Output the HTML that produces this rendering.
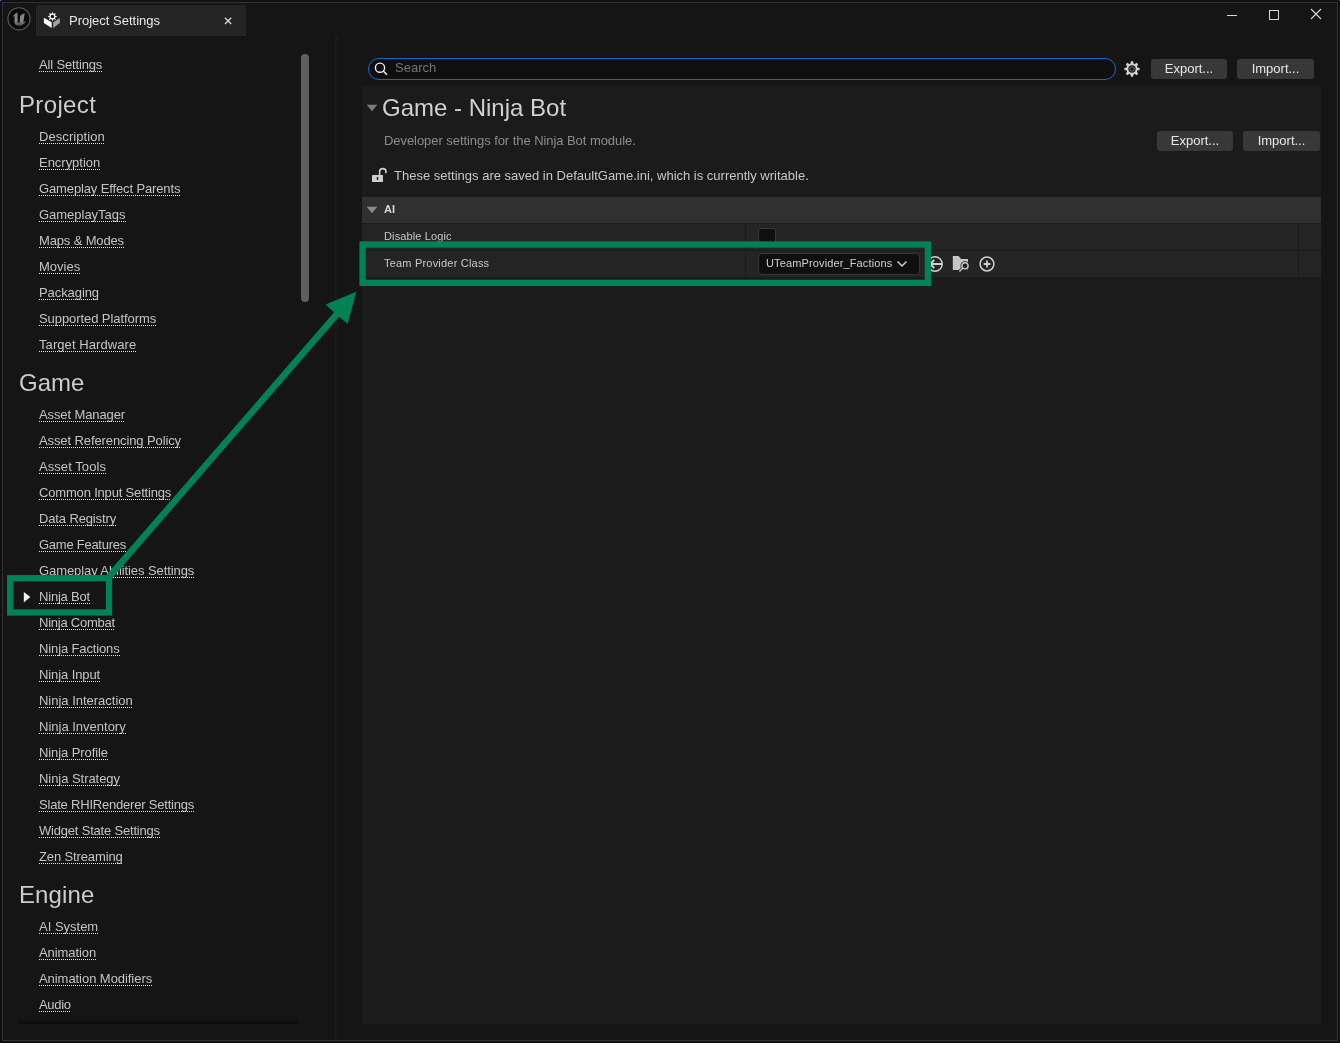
<!DOCTYPE html>
<html><head><meta charset="utf-8">
<style>
*{margin:0;padding:0;box-sizing:border-box}
html,body{width:1340px;height:1043px;overflow:hidden;background:#101010;font-family:"Liberation Sans",sans-serif}
.t{will-change:transform}
.a{position:absolute}
#win{position:absolute;left:2px;top:2px;width:1336px;height:1039px;border:1px solid #323232;background:#151515}
.t{position:absolute;white-space:nowrap;line-height:20px}
.lk{font-size:13px;color:#c4c4c4;left:39px}
.lk::after{content:"";position:absolute;left:0;right:0;top:16px;height:1px;background:repeating-linear-gradient(90deg,#e6e6e6 0 1px,transparent 1px 2px)}
.hd{font-size:24px;color:#cccccc;left:19px;line-height:30px}
.btn{will-change:transform;position:absolute;background:#383838;border-radius:3px;color:#e6e6e6;font-size:13px;line-height:20px;text-align:center}
</style></head><body>
<div id="win"></div>
<div class="a" style="left:0;top:0;width:1px;height:1px;background:#4a7fd0"></div>
<div class="a" style="left:1339px;top:0;width:1px;height:1px;background:#3a5f9a"></div>

<!-- UE logo -->
<svg class="a" style="left:0;top:0" width="34" height="34" viewBox="0 0 34 34">
  <defs><linearGradient id="ug" x1="0" y1="0" x2="0" y2="1"><stop offset="0" stop-color="#7a7a7a"/><stop offset="0.6" stop-color="#8c8c8c"/><stop offset="1" stop-color="#4e4e4e"/></linearGradient></defs>
  <circle cx="19" cy="18.8" r="11.1" fill="#0a0a0a" stroke="#5a5a5a" stroke-width="1.1"/>
  <path d="M12 17.6 Q13.8 13.6 17.5 12.2 L17.6 22 Q18 23.3 19.8 22.6 L20.1 16 Q21.8 13.9 24.7 13.1 L23.3 22.1 Q24.6 21.9 25.9 20.9 Q23.6 25.6 19 25.7 Q14.9 25.7 14.5 22.4 L14.6 16.1 Q13 16.5 12 17.6 Z" fill="url(#ug)"/>
</svg>

<!-- Tab -->
<div class="a" style="left:36px;top:5px;width:210px;height:31px;background:#242424;border-radius:4px 4px 0 0"></div>
<svg class="a" style="left:40px;top:8px" width="24" height="24" viewBox="0 0 24 24">
  <path d="M3.9 9.8 L11.7 14.3 L11.7 20 L3.9 15 Z" fill="#ffffff"/>
  <path d="M13.2 14.3 L19.9 9.9 L19.9 15 L13.2 20 Z" fill="#a2a2a2"/>
  <path d="M12.40 3.70 L13.43 6.01 L15.79 5.11 L14.89 7.47 L17.20 8.50 L14.89 9.53 L15.79 11.89 L13.43 10.99 L12.40 13.30 L11.37 10.99 L9.01 11.89 L9.91 9.53 L7.60 8.50 L9.91 7.47 L9.01 5.11 L11.37 6.01 Z" fill="#ffffff"/>
  <circle cx="12.4" cy="8.5" r="1.7" fill="#111"/>
</svg>
<div class="t" style="left:69px;top:11px;font-size:13px;color:#e8e8e8">Project Settings</div>
<svg class="a" style="left:224px;top:17px" width="8" height="8" viewBox="0 0 8 8"><path d="M1 0.8 L7.2 7 M7.2 0.8 L1 7" stroke="#d4d4d4" stroke-width="1.4"/></svg>

<!-- window controls -->
<div class="a" style="left:1227px;top:15px;width:10px;height:1px;background:#d8d8d8"></div>
<div class="a" style="left:1269px;top:10px;width:10px;height:10px;border:1px solid #d8d8d8"></div>
<svg class="a" style="left:1310px;top:8px" width="12" height="12" viewBox="0 0 12 12"><path d="M1 1 L11 11 M11 1 L1 11" stroke="#d8d8d8" stroke-width="1.1"/></svg>

<!-- sidebar divider strip -->
<div class="a" style="left:335px;top:36px;width:3px;height:1004px;background:#1a1a1a"></div>
<!-- scrollbar -->
<div class="a" style="left:301px;top:54px;width:8px;height:248px;background:#5e5e5e;border-radius:4px"></div>
<!-- bottom shadow -->
<div class="a" style="left:19px;top:1016px;width:280px;height:8px;background:linear-gradient(rgba(0,0,0,0),rgba(0,0,0,0.15) 60%,rgba(0,0,0,0.55))"></div>

<div id="sidebar">
<div class="t lk" style="top:55px;letter-spacing:-0.154px">All Settings</div>
<div class="t hd" style="top:90px;letter-spacing:0.35px">Project</div>
<div class="t lk" style="top:127px;letter-spacing:0.07px">Description</div>
<div class="t lk" style="top:153px;letter-spacing:-0.022px">Encryption</div>
<div class="t lk" style="top:179px;letter-spacing:-0.13px">Gameplay Effect Parents</div>
<div class="t lk" style="top:205px;letter-spacing:-0.018px">GameplayTags</div>
<div class="t lk" style="top:231px;letter-spacing:-0.15px">Maps &amp; Modes</div>
<div class="t lk" style="top:257px;letter-spacing:0.002px">Movies</div>
<div class="t lk" style="top:283px;letter-spacing:-0.08px">Packaging</div>
<div class="t lk" style="top:309px;letter-spacing:-0.075px">Supported Platforms</div>
<div class="t lk" style="top:335px;letter-spacing:0.079px">Target Hardware</div>
<div class="t hd" style="top:368px">Game</div>
<div class="t lk" style="top:405px;letter-spacing:-0.111px">Asset Manager</div>
<div class="t lk" style="top:431px;letter-spacing:-0.105px">Asset Referencing Policy</div>
<div class="t lk" style="top:457px;letter-spacing:0.068px">Asset Tools</div>
<div class="t lk" style="top:483px;letter-spacing:-0.174px">Common Input Settings</div>
<div class="t lk" style="top:509px;letter-spacing:-0.135px">Data Registry</div>
<div class="t lk" style="top:535px;letter-spacing:-0.256px">Game Features</div>
<div class="t lk" style="top:561px;letter-spacing:-0.086px">Gameplay Abilities Settings</div>
<div class="t lk" style="top:587px;letter-spacing:-0.194px">Ninja Bot</div>
<div class="t lk" style="top:613px;letter-spacing:-0.23px">Ninja Combat</div>
<div class="t lk" style="top:639px;letter-spacing:-0.127px">Ninja Factions</div>
<div class="t lk" style="top:665px;letter-spacing:-0.096px">Ninja Input</div>
<div class="t lk" style="top:691px;letter-spacing:-0.015px">Ninja Interaction</div>
<div class="t lk" style="top:717px;letter-spacing:-0.001px">Ninja Inventory</div>
<div class="t lk" style="top:743px;letter-spacing:-0.084px">Ninja Profile</div>
<div class="t lk" style="top:769px;letter-spacing:-0.047px">Ninja Strategy</div>
<div class="t lk" style="top:795px;letter-spacing:-0.205px">Slate RHIRenderer Settings</div>
<div class="t lk" style="top:821px;letter-spacing:-0.196px">Widget State Settings</div>
<div class="t lk" style="top:847px;letter-spacing:-0.128px">Zen Streaming</div>
<div class="t hd" style="top:880px;left:18.5px;letter-spacing:0.1px">Engine</div>
<div class="t lk" style="top:917px;letter-spacing:-0.006px">AI System</div>
<div class="t lk" style="top:943px;letter-spacing:-0.079px">Animation</div>
<div class="t lk" style="top:969px;letter-spacing:-0.056px">Animation Modifiers</div>
<div class="t lk" style="top:995px;letter-spacing:-0.33px">Audio</div>
</div>

<!-- content panel -->
<div class="a" style="left:362px;top:86px;width:959px;height:938px;background:#1b1b1b"></div>


<!-- search bar -->
<div class="a" style="left:368px;top:58px;width:748px;height:22px;border:1.4px solid #1767cf;border-radius:11px;background:#0f0f0f"></div>
<svg class="a" style="left:372px;top:60px" width="18" height="18" viewBox="0 0 18 18"><circle cx="8" cy="7.7" r="4.6" fill="none" stroke="#efefef" stroke-width="1.4"/><path d="M11.3 11 L15 14.8" stroke="#efefef" stroke-width="1.5"/></svg>
<div class="t" style="left:395px;top:58px;font-size:13px;color:#747474">Search</div>
<!-- gear -->
<svg class="a" style="left:1124px;top:61px" width="16" height="16" viewBox="-8 -8 16 16">
 <path d="M-1.61 -5.26 L-1.07 -7.63 L1.07 -7.63 L1.61 -5.26 L2.14 -5.17 L2.58 -4.86 L4.63 -6.15 L6.15 -4.63 L4.86 -2.58 L5.17 -2.14 L5.26 -1.61 L7.63 -1.07 L7.63 1.07 L5.26 1.61 L5.17 2.14 L4.86 2.58 L6.15 4.63 L4.63 6.15 L2.58 4.86 L2.14 5.17 L1.61 5.26 L1.07 7.63 L-1.07 7.63 L-1.61 5.26 L-2.14 5.17 L-2.58 4.86 L-4.63 6.15 L-6.15 4.63 L-4.86 2.58 L-5.17 2.14 L-5.26 1.61 L-7.63 1.07 L-7.63 -1.07 L-5.26 -1.61 L-5.17 -2.14 L-4.86 -2.58 L-6.15 -4.63 L-4.63 -6.15 L-2.58 -4.86 L-2.14 -5.17 Z" fill="#d2d2d2"/>
 <circle r="3.7" fill="#1a1a1a"/><circle r="2.8" fill="#555"/><circle r="1.5" fill="#141414"/>
</svg>
<div class="btn" style="left:1151px;top:59px;width:76px;height:20px">Export...</div>
<div class="btn" style="left:1237px;top:59px;width:77px;height:20px">Import...</div>

<!-- header -->
<svg class="a" style="left:366px;top:104px" width="12" height="8" viewBox="0 0 12 8"><path d="M0.7 0.8 L11.3 0.8 L6 7.3 Z" fill="#7c7c7c"/></svg>
<div class="t" style="left:382px;top:93px;font-size:24px;line-height:30px;color:#d0d0d0">Game - Ninja Bot</div>
<div class="t" style="left:384px;top:131px;font-size:13px;letter-spacing:-0.06px;color:#8c8c8c">Developer settings for the Ninja Bot module.</div>
<div class="btn" style="left:1157px;top:131px;width:76px;height:20px">Export...</div>
<div class="btn" style="left:1243px;top:131px;width:77px;height:20px">Import...</div>

<!-- lock -->
<svg class="a" style="left:370px;top:166px" width="18" height="18" viewBox="0 0 18 18">
 <path d="M9.6 9 L9.6 5.8 A3.2 3.2 0 0 1 16 5.8 L16 7.2" fill="none" stroke="#cfcfcf" stroke-width="1.6"/>
 <rect x="2" y="9" width="11" height="7" rx="0.6" fill="#cfcfcf"/>
 <rect x="6.8" y="11" width="1.4" height="3" fill="#1b1b1b"/>
</svg>
<div class="t" style="left:394px;top:166px;font-size:13px;color:#c6c6c6">These settings are saved in DefaultGame.ini, which is currently writable.</div>

<!-- category AI -->
<div class="a" style="left:362px;top:197px;width:959px;height:26px;background:#303030"></div>
<svg class="a" style="left:366px;top:206px" width="12" height="8" viewBox="0 0 12 8"><path d="M0.7 0.8 L11.3 0.8 L6 7.3 Z" fill="#8a8a8a"/></svg>
<div class="t" style="left:384px;top:199px;font-size:11px;font-weight:bold;color:#d6d6d6">AI</div>
<!-- rows -->
<div class="a" style="left:362px;top:224px;width:959px;height:26px;background:#242424"></div>
<div class="a" style="left:362px;top:251px;width:959px;height:26px;background:#242424"></div>
<div class="a" style="left:745px;top:224px;width:1px;height:53px;background:#1b1b1b"></div>
<div class="a" style="left:1298px;top:224px;width:1px;height:53px;background:#1b1b1b"></div>
<div class="t" style="left:384px;top:226px;font-size:11px;letter-spacing:0.12px;color:#c8c8c8">Disable Logic</div>
<div class="t" style="left:384px;top:253px;font-size:11px;letter-spacing:0.2px;color:#c8c8c8">Team Provider Class</div>
<!-- checkbox -->
<div class="a" style="left:758px;top:228px;width:18px;height:18px;background:#0f0f0f;border:1px solid #383838;border-radius:3px"></div>
<!-- combo -->
<div class="a" style="left:758px;top:253px;width:162px;height:22px;background:#0f0f0f;border:1px solid #353535;border-radius:4px"></div>
<div class="t" style="left:766px;top:253px;font-size:11px;letter-spacing:0.13px;color:#d0d0d0">UTeamProvider_Factions</div>
<svg class="a" style="left:896px;top:260px" width="12" height="8" viewBox="0 0 12 8"><path d="M1.5 1.5 L6 6 L10.5 1.5" fill="none" stroke="#d0d0d0" stroke-width="1.5"/></svg>
<!-- row icons -->
<svg class="a" style="left:926px;top:255px" width="18" height="18" viewBox="0 0 18 18">
 <path d="M3.6 4.2 A7.2 7.2 0 1 1 3.6 13.8" fill="none" stroke="#cfcfcf" stroke-width="1.5"/>
 <path d="M16.4 9 L4.2 9 M8.2 5 L4.2 9 L8.2 13" fill="none" stroke="#cfcfcf" stroke-width="2"/>
</svg>
<svg class="a" style="left:951px;top:254px" width="20" height="20" viewBox="0 0 20 20">
 <path d="M1.8 2 L7.6 2 L10 5 L17 5 L17 16 L1.8 16 Z" fill="#c6c6c6"/>
 <circle cx="14" cy="11.8" r="4.6" fill="#242424"/>
 <path d="M11.7 14.1 L8.2 17.8" stroke="#242424" stroke-width="3.2"/>
 <circle cx="14" cy="11.8" r="3.1" fill="none" stroke="#c6c6c6" stroke-width="1.4"/>
 <path d="M11.9 14.1 L8.4 17.6" stroke="#c6c6c6" stroke-width="1.4"/>
</svg>
<svg class="a" style="left:978px;top:255px" width="18" height="18" viewBox="0 0 18 18">
 <circle cx="9" cy="9" r="6.9" fill="none" stroke="#cfcfcf" stroke-width="1.5"/>
 <path d="M9 5.6 L9 12.4 M5.6 9 L12.4 9" stroke="#cfcfcf" stroke-width="1.8"/>
</svg>

<svg class="a" style="left:22px;top:590px" width="10" height="14" viewBox="0 0 10 14"><path d="M1.8 2 L8.4 7 L1.8 12.4 Z" fill="#f2f2f2"/></svg>
<!-- green annotations -->
<svg class="a" style="left:0;top:0" width="1340" height="1043" viewBox="0 0 1340 1043">
 <rect x="10.2" y="578.2" width="98.8" height="34.3" fill="none" stroke="#008254" stroke-width="6.3"/>
 <rect x="362.6" y="244.5" width="565.3" height="38.4" fill="none" stroke="#008254" stroke-width="6.3"/>
 <path d="M108 578 L337 314" stroke="#008254" stroke-width="6.5"/>
 <path d="M356.3 291.8 L325.5 304.5 L334.5 312.8 L347.7 324 Z" fill="#008254"/>
</svg>

</body></html>
